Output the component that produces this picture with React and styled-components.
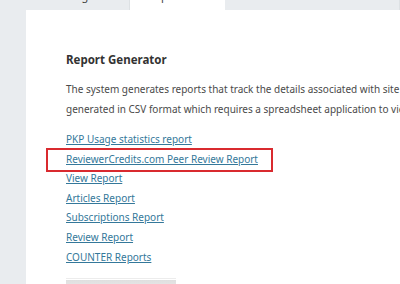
import React from 'react';
import styled, { createGlobalStyle } from 'styled-components';

const GlobalStyle = createGlobalStyle`
  html, body {
    margin: 0;
    padding: 0;
    background: #e9ecef;
    font-family: "Noto Sans", "Open Sans", sans-serif;
    overflow: hidden;
  }
`;

const Page = styled.div`
  width: 400px;
  height: 284px;
  display: flex;
  flex-direction: column;
  padding-left: 26px;
  box-sizing: border-box;
  overflow: hidden;
`;

const Tabs = styled.div`
  display: flex;
  height: 10px;
  flex-shrink: 0;
`;

const Tab = styled.div`
  width: ${(props) => props.width}px;
  height: 10px;
  background: ${(props) => (props.active ? '#ffffff' : '#e9ecef')};
  border-right: ${(props) => (props.active ? 'none' : '1px solid #dde1e4')};
  box-sizing: border-box;
  overflow: hidden;
  position: relative;
  & span {
    position: absolute;
    left: ${(props) => props.textLeft}px;
    top: -11px;
    font-size: 11px;
    line-height: 14px;
    color: #444;
    white-space: nowrap;
  }
`;

const Panel = styled.div`
  flex: 1;
  background: #ffffff;
  padding: 40px 0 0 40px;
  box-sizing: border-box;
`;

const Heading = styled.h2`
  margin: 0;
  font-size: 11.5px;
  line-height: 20px;
  font-weight: 700;
  color: #333;
`;

const Text = styled.p`
  margin: 9px 0 0;
  font-size: 10px;
  line-height: 20px;
  color: #4a4a4a;
  white-space: nowrap;
`;

const LinkList = styled.ul`
  list-style: none;
  margin: 11px 0 0;
  padding: 0;
`;

const LinkItem = styled.li`
  position: relative;
  font-size: 10px;
  line-height: 19.6px;
  height: 19.6px;
`;

const ReportLink = styled.a`
  color: #34789a;
  text-decoration: underline;
  text-underline-offset: 1px;
`;

const Highlight = styled.div`
  position: absolute;
  left: -20px;
  top: -2px;
  width: 227px;
  height: 24px;
  border: 2px solid #d92a2f;
  box-sizing: border-box;
  pointer-events: none;
`;

const Button = styled.div`
  margin-top: 11px;
  width: 110px;
  height: 20px;
  border-top: 1px solid #ececec;
  background: linear-gradient(#dedede, #f4f4f4);
  box-shadow: inset 0 1px 0 #fff;
`;

const links = [
  'PKP Usage statistics report',
  'ReviewerCredits.com Peer Review Report',
  'View Report',
  'Articles Report',
  'Subscriptions Report',
  'Review Report',
  'COUNTER Reports',
];

export default function App() {
  return (
    <>
      <GlobalStyle />
      <Page>
        <Tabs>
          <Tab width={104} textLeft={36}>
            <span>Usage Stats</span>
          </Tab>
          <Tab width={95} active textLeft={18}>
            <span>Reports</span>
          </Tab>
          <Tab width={175} />
        </Tabs>
        <Panel>
          <Heading>Report Generator</Heading>
          <Text>
            The system generates reports that track the details associated with site usage and submissions over a given period of time. Reports are
            <br />
            generated in CSV format which requires a spreadsheet application to view.
          </Text>
          <LinkList>
            {links.map((l, i) => (
              <LinkItem key={l}>
                <ReportLink href="#">{l}</ReportLink>
                {i === 1 && <Highlight />}
              </LinkItem>
            ))}
          </LinkList>
          <Button />
        </Panel>
      </Page>
    </>
  );
}
